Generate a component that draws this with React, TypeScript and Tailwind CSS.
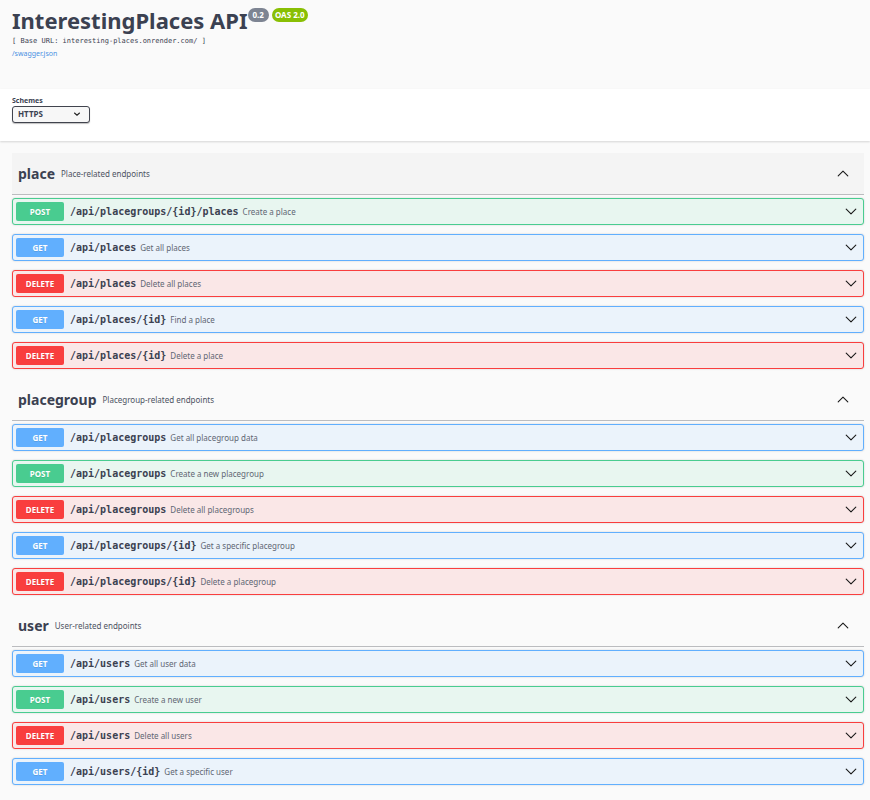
type Method = "GET" | "POST" | "DELETE";

interface Operation {
  method: Method;
  path: string;
  summary: string;
}

interface Tag {
  name: string;
  description: string;
  highlighted?: boolean;
  operations: Operation[];
}

const tags: Tag[] = [
  {
    name: "place",
    description: "Place-related endpoints",
    highlighted: true,
    operations: [
      { method: "POST", path: "/api/placegroups/{id}/places", summary: "Create a place" },
      { method: "GET", path: "/api/places", summary: "Get all places" },
      { method: "DELETE", path: "/api/places", summary: "Delete all places" },
      { method: "GET", path: "/api/places/{id}", summary: "Find a place" },
      { method: "DELETE", path: "/api/places/{id}", summary: "Delete a place" },
    ],
  },
  {
    name: "placegroup",
    description: "Placegroup-related endpoints",
    operations: [
      { method: "GET", path: "/api/placegroups", summary: "Get all placegroup data" },
      { method: "POST", path: "/api/placegroups", summary: "Create a new placegroup" },
      { method: "DELETE", path: "/api/placegroups", summary: "Delete all placegroups" },
      { method: "GET", path: "/api/placegroups/{id}", summary: "Get a specific placegroup" },
      { method: "DELETE", path: "/api/placegroups/{id}", summary: "Delete a placegroup" },
    ],
  },
  {
    name: "user",
    description: "User-related endpoints",
    operations: [
      { method: "GET", path: "/api/users", summary: "Get all user data" },
      { method: "POST", path: "/api/users", summary: "Create a new user" },
      { method: "DELETE", path: "/api/users", summary: "Delete all users" },
      { method: "GET", path: "/api/users/{id}", summary: "Get a specific user" },
    ],
  },
];

const rowStyles: Record<Method, string> = {
  GET: "border-[#61affe] bg-[#ebf3fb]",
  POST: "border-[#49cc90] bg-[#e8f6f0]",
  DELETE: "border-[#f93e3e] bg-[#fae7e7]",
};

const badgeStyles: Record<Method, string> = {
  GET: "bg-[#61affe]",
  POST: "bg-[#49cc90]",
  DELETE: "bg-[#f93e3e]",
};

function Chevron({ up = false }: { up?: boolean }) {
  return (
    <svg className="h-3 w-3 shrink-0" viewBox="0 0 12 12" fill="none" stroke="#1a1a1a" strokeWidth="1.1" strokeLinecap="round" strokeLinejoin="round" aria-hidden="true">
      <path d={up ? "M1.2 7.9 6 3.1l4.8 4.8" : "M1.2 3.1 6 7.9l4.8-4.8"} />
    </svg>
  );
}

function OperationRow({ method, path, summary }: Operation) {
  return (
    <button type="button" className={`flex h-[27px] w-full items-center rounded-[3px] border pr-1.5 pl-[3px] text-left shadow-[0_0_2px_rgba(0,0,0,0.19)] ${rowStyles[method]}`}>
      <span className={`h-[19px] w-12 shrink-0 rounded-[2px] text-center text-[8px] leading-[19px] font-bold text-white [text-shadow:0_1px_0_rgba(0,0,0,0.1)] ${badgeStyles[method]}`}>
        {method}
      </span>
      <span className="ml-1.5 font-['DejaVu_Sans_Mono',monospace] text-[10px] leading-4 font-bold">{path}</span>
      <span className="ml-1 flex-1 text-[8px] leading-4 text-[#5f6673]">{summary}</span>
      <Chevron />
    </button>
  );
}

function TagSection({ name, description, highlighted, operations }: Tag) {
  return (
    <section className="mb-2.5">
      <h2>
        <button
          type="button"
          className={`flex h-[42px] w-full items-center border-b border-[#bbbcbf] pr-[15px] pl-1.5 text-left ${highlighted ? "bg-[#f4f4f4]" : ""}`}
        >
          <span className="text-[14px] leading-5 font-bold">{name}</span>
          <span className="ml-1.5 flex-1 text-[8px] leading-4 text-[#4d5362]">{description}</span>
          <Chevron up />
        </button>
      </h2>
      <div className="mt-[3px] flex flex-col gap-[9px]">
        {operations.map((operation) => (
          <OperationRow key={operation.method + operation.path} {...operation} />
        ))}
      </div>
    </section>
  );
}

export default function App() {
  return (
    <div className="min-h-screen bg-[#fafafa] font-['Noto_Sans',sans-serif] text-[#3b4151]">
      <header className="px-3 pt-[7px] pb-7">
        <div className="mb-0.5 flex items-start">
          <h1 className="text-[22px] leading-[26px] font-bold">InterestingPlaces API</h1>
          <span className="mt-px mr-[3px] h-3.5 rounded-full bg-[#7d8492] px-[5px] text-[8px] leading-[14px] font-bold text-white">0.2</span>
          <span className="mt-px h-3.5 rounded-full bg-[#89bf04] px-[3px] text-[8px] leading-[14px] font-bold text-white">OAS 2.0</span>
        </div>
        <p className="font-['DejaVu_Sans_Mono',monospace] text-[7px] leading-3">[ Base URL: interesting-places.onrender.com/ ]</p>
        <a href="/swagger.json" className="block text-[7px] leading-[14px] text-[#4990e2]">/swagger.json</a>
      </header>

      <div className="bg-white px-3 pt-[7px] pb-[18px] shadow-[0_1px_2px_rgba(0,0,0,0.15)]">
        <label htmlFor="schemes" className="block text-[7px] leading-[10px] font-bold">Schemes</label>
        <div className="relative w-[78px]">
          <select id="schemes" className="block h-[17px] w-full appearance-none rounded-[3px] border border-[#41444e] bg-[#f7f7f7] pb-0.5 pl-[5px] text-[8px] leading-[13px] font-bold shadow-[0_1px_1px_rgba(0,0,0,0.25)]">
            <option>HTTPS</option>
          </select>
          <svg className="pointer-events-none absolute top-1 right-[9px] h-2 w-2" viewBox="0 0 8 8" fill="none" stroke="#222" strokeWidth="1.1" strokeLinecap="round" aria-hidden="true">
            <path d="M1.5 3 4 5.2 6.5 3" />
          </svg>
        </div>
      </div>

      <main className="pt-3 pr-1.5 pl-3">
        {tags.map((tag) => (
          <TagSection key={tag.name} {...tag} />
        ))}
      </main>
    </div>
  );
}
